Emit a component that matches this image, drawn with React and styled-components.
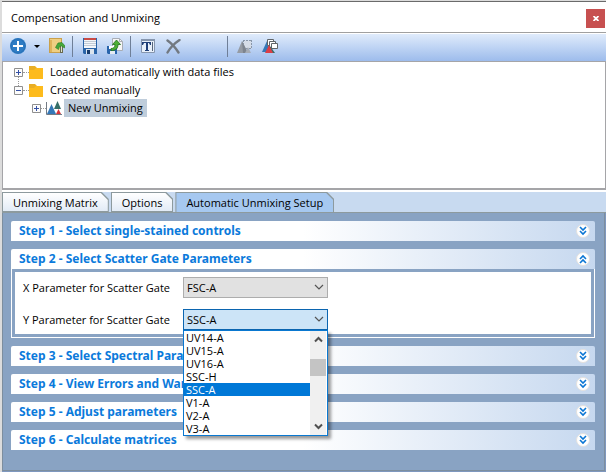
import React, { useState } from 'react'
import styled, { createGlobalStyle } from 'styled-components'

const GlobalStyle = createGlobalStyle`
  * {
    box-sizing: border-box;
  }
  body {
    margin: 0;
    background: #dcdcdc;
    color: #000;
    font-family: 'Open Sans', 'Noto Sans', sans-serif;
    font-size: 11px;
    line-height: 18px;
  }
  button, select {
    margin: 0;
    padding: 0;
    border: 0;
    background: none;
    color: inherit;
    font: inherit;
  }
  svg {
    display: block;
    flex: none;
  }
`

const Window = styled.main`
  margin: 1px 0 0 2px;
  min-height: calc(100vh - 1px);
  display: flex;
  flex-direction: column;
  border-top: 1px solid #6b6b6b;
  background: #7f98bf;
`

const TitleBar = styled.header`
  height: 30px;
  display: flex;
  align-items: center;
  justify-content: space-between;
  padding: 2px 1px 0 9px;
  background: #fff;
`

const Title = styled.h1`
  margin: 0;
  font-size: 11px;
  font-weight: 400;
`

const CloseButton = styled.button`
  width: 19px;
  height: 19px;
  display: flex;
  align-items: center;
  justify-content: center;
  background: #c75050;
`

const Toolbar = styled.div`
  height: 30px;
  display: flex;
  align-items: center;
  padding: 0 0 2px 8px;
  border-top: 1px solid #a0a0a0;
  border-bottom: 1px solid #a5a5a8;
  box-shadow: inset 0 1px #fff;
  background: linear-gradient(#e2edfc, #9dbcec);
`

const ToolButton = styled.button`
  width: ${p => p.$narrow ? 14 : 16}px;
  height: 20px;
  margin-right: ${p => p.$gap || 9}px;
  display: flex;
  align-items: center;
  justify-content: center;
`

const Separator = styled.span`
  width: 1px;
  height: 21px;
  margin-right: 9px;
  background: #6f7f98;
`

const Tree = styled.ul`
  height: 128px;
  margin: 0;
  padding: 1px 0 0 11px;
  list-style: none;
  background: #fff;
  border: 1px solid #a5a5a8;
  border-top: 0;
  border-bottom-width: 2px;
`

const Branch = styled.ul`
  margin: 0;
  padding: 0 0 0 18px;
  list-style: none;
`

const TreeRow = styled.div`
  height: 18px;
  display: flex;
  align-items: center;
`

const Expander = styled.button`
  position: relative;
  width: 9px;
  height: 9px;

  &::after {
    content: '';
    display: ${p => p.$linked ? 'block' : 'none'};
    position: absolute;
    top: 9px;
    left: 4px;
    height: 9px;
    border-left: 1px dotted #999;
  }
`

const Dots = styled.span`
  width: ${p => p.$short ? 5 : 6}px;
  border-top: 1px dotted #999;
`

const NodeLabel = styled.span`
  margin-left: ${p => p.$selected ? 2 : 3}px;
  padding: 0 4px;
  background: ${p => p.$selected ? '#bfcddb' : 'transparent'};
`

const TabBar = styled.div`
  display: flex;
  gap: 2px;
  height: 23px;
  border-top: 2px solid #fff;
  border-bottom: 1px solid #8d9a9e;
  background: #c8daf0;
`

const cut = 'polygon(0 0, calc(100% - 7px) 0, 100% 7px, 100% 100%, 0 100%)'

const Tab = styled.button`
  height: ${p => p.$active ? 21 : 20}px;
  padding: 1px;
  display: flex;
  clip-path: ${cut};
  background: #8d9a9e;
`

const TabFace = styled.span`
  height: 100%;
  padding: 1px 10px 0;
  white-space: nowrap;
  clip-path: ${cut};
  background: ${p => p.$active ? '#a6c8f0' : 'linear-gradient(#fff, #e2ebf6)'};
`

const Panel = styled.section`
  flex: 1;
  display: flex;
  flex-direction: column;
  gap: 8px;
  margin: 0 1px 1px 0;
  padding: 8px 9px 8px 8px;
  border: 1px solid #7d8e9e;
  border-top: 0;
  background: #89a3c3;
`

const StepHeader = styled.button`
  width: 100%;
  height: 20px;
  padding: 0 5px 0 8px;
  display: flex;
  align-items: center;
  justify-content: space-between;
  border-radius: 2px 2px 0 0;
  background: linear-gradient(90deg, #fff 50%, #c6d8ef);
  color: #0b7adb;
  font-family: 'Noto Sans', sans-serif;
  font-size: 12px;
  font-weight: 700;
`

const StepBody = styled.div`
  padding: 3px;
  border: 1px solid #fff;
  border-top: 0;
`

const StepForm = styled.div`
  display: grid;
  grid-template-columns: 160px 145px;
  row-gap: 11px;
  padding: 5px 8px 4px;
  background: #fff;
`

const Label = styled.label`
  line-height: 21px;
`

const Field = styled.div`
  position: relative;
`

const Combo = styled.select`
  display: block;
  width: 100%;
  height: 21px;
  padding-left: 3px;
  appearance: none;
  border: 1px solid ${p => p.$open ? '#0b65b0' : '#adadad'};
  background: ${p => p.$open ? '#cce4f7' : '#e1e1e1'};
`

const ComboArrow = styled.svg`
  position: absolute;
  top: 7px;
  right: 4px;
  pointer-events: none;
`

const Popup = styled.div`
  position: absolute;
  z-index: 1;
  top: 21px;
  left: 0;
  right: 0;
  display: flex;
  border: 1px solid #0a78d0;
  background: #fff;
  box-shadow: 3px 3px 3px rgba(0, 0, 0, 0.4);
`

const Options = styled.ul`
  flex: 1;
  margin: 0;
  padding: 0;
  list-style: none;
`

const Option = styled.li`
  height: 13px;
  padding-left: 2px;
  line-height: 13px;
  background: ${p => p.$selected ? '#0078d7' : 'transparent'};
  color: ${p => p.$selected ? '#fff' : '#000'};
`

const ScrollBar = styled.div`
  width: 17px;
  display: flex;
  flex-direction: column;
  justify-content: space-between;
  border-right: 1px solid #fff;
  background: #f0f0f0;
`

const ScrollButton = styled.button`
  height: 17px;
  display: flex;
  align-items: center;
  justify-content: center;
`

const Thumb = styled.span`
  height: 17px;
  margin-bottom: 31px;
  background: #c4c4c4;
`

const AddIcon = () => (
  <svg width="16" height="16" viewBox="0 0 16 16">
    <circle cx="8" cy="8" r="8" fill="#2e7cc4" />
    <circle cx="8" cy="8" r="7" fill="none" stroke="#2870b6" />
    <path d="M8 3v10M3 8h10" stroke="#fff" strokeWidth="2" />
  </svg>
)

const OpenIcon = () => (
  <svg width="16" height="16" viewBox="0 0 16 16">
    <path d="M0 0h13v15H0z" fill="#c9a04c" />
    <path d="M1 1h11v13H1z" fill="#efcf83" />
    <path d="M1 2h2v12H1z" fill="#dfb45b" />
    <path d="M12.500 15V8" stroke="#6a6a50" strokeWidth="3" />
    <path d="M12.500 14V8" stroke="#dfe8d0" />
    <path d="M6.500 9.500L9 5l4-.5 3 3.500-.5 2-3-2-2 .5-1 3z" fill="#45a83a" stroke="#2a7a25" strokeWidth=".6" />
  </svg>
)

const SaveIcon = () => (
  <svg width="14" height="16" viewBox="0 0 14 16">
    <path d="M0 0h14v16H1l-1-1z" fill="#2a64a8" />
    <path d="M1 2h12v8H1z" fill="#f4f7fb" />
    <path d="M1 0h12v2H1z" fill="#c94a44" />
    <path d="M1 3.500h12M1 5.500h12M1 7.500h12" stroke="#c3ccd6" />
    <path d="M3 11h8v5H3z" fill="#dce4ed" />
    <path d="M4 12h3v4H4z" fill="#173b6c" />
  </svg>
)

const ExportIcon = () => (
  <svg width="16" height="16" viewBox="0 0 16 16">
    <path d="M5.500.5h7l3 3v9h-10z" fill="#f5f5f5" stroke="#a8adb5" />
    <path d="M12.500.5v3h3" fill="none" stroke="#a8adb5" />
    <path d="M0 8h10v8H1l-1-1z" fill="#2864ac" />
    <path d="M2 8h6v3H2z" fill="#fff" />
    <path d="M3 13h5v3H3z" fill="#e5ebf3" />
    <path d="M4 10.500c3 0 4-1.500 4-4H5.500L9.500 2l4 4.500H11c0 4-2 6-7 6z" fill="#4caf35" stroke="#20701a" strokeWidth=".8" />
  </svg>
)

const RenameIcon = () => (
  <svg width="14" height="14" viewBox="0 0 14 14">
    <path d="M.5.5h13v13H.5z" fill="#e8f0fa" stroke="#8696ae" />
    <path d="M0 0h14v2H0z" fill="#8696ae" />
    <path d="M1 3h9v3H9L8 4H7v7h1v1H4v-1h1V4H3L2 6H1z" fill="#1f3f78" />
    <path d="M11.500 3v9" stroke="#56657c" />
  </svg>
)

const DeleteIcon = () => (
  <svg width="15" height="15" viewBox="0 0 15 15">
    <path d="M1.500 1.500C5 4 9 8 12.500 13.500M13.500 1C9 4 4 9 1.500 13.500" fill="none" stroke="#727981" strokeWidth="2.400" strokeLinecap="round" />
  </svg>
)

const GateIcon = () => (
  <svg width="16" height="16" viewBox="0 0 16 16">
    <path d="M6 2.500h8.500V11H8" fill="#d5dce7" />
    <path d="M6 2.500h9M14.500 2v9M6.500 2v4M9 10.500h6" fill="none" stroke="#8997aa" strokeDasharray="2 1" />
    <path d="M0 15L5 3l6 12z" fill="#959ba4" />
    <path d="M5 3l6 12H6z" fill="#7d848e" />
    <path d="M8 15l3-6 3 6z" fill="#a7adb6" />
  </svg>
)

const StackIcon = () => (
  <svg width="16" height="16" viewBox="0 0 16 16">
    <path d="M0 14L5 3l5 11z" fill="#3478b8" />
    <path d="M5.500 1.500h6v6h-6z" fill="#fff" stroke="#5f6468" />
    <path d="M7.500 3.500h6v6h-6z" fill="#fff" stroke="#5f6468" />
    <path d="M9.500 5.500h6v5h-6z" fill="#fff" stroke="#5f6468" />
    <path d="M8 8l5 7H8z" fill="#356f68" />
    <path d="M3 15l4-8 4 8z" fill="#dc3e46" />
  </svg>
)

const FolderIcon = () => (
  <svg width="14" height="13" viewBox="0 0 14 13">
    <path d="M0 0h6l2 2h6v11H0z" fill="#e9ae25" />
    <path d="M0 4h5l2-2h7v11H0z" fill="#fdbb1d" />
  </svg>
)

const MatrixIcon = () => (
  <svg width="16" height="15" viewBox="0 0 16 15">
    <path d="M1 13L5.500 3 10 13z" fill="#3478b8" />
    <path d="M8 8l3.500-8L15 8z" fill="#356f68" />
    <path d="M10 13l2.500-5 2.500 5z" fill="#d8353b" />
    <path d="M.5 1v12.500H16" fill="none" stroke="#737b85" />
  </svg>
)

const Box = ({ open }) => (
  <svg width="9" height="9" viewBox="0 0 9 9">
    <path d="M.5.5h8v8h-8z" fill="#fcfcfc" stroke="#8f8f8f" />
    <path d={open ? 'M2 4.500h5' : 'M2 4.500h5M4.500 2v5'} stroke="#3450a5" />
  </svg>
)

const Chevrons = ({ up }) => (
  <svg width="14" height="14" viewBox="0 0 14 14">
    <circle cx="7" cy="7" r="6.500" fill="#fff" stroke="#e3e0dd" />
    <path
      d={up ? 'M4 7l3-3 3 3M4 11l3-3 3 3' : 'M4 3l3 3 3-3M4 7l3 3 3-3'}
      fill="none"
      stroke="#0b76d4"
      strokeWidth="1.600"
    />
  </svg>
)

const ScrollArrow = ({ up }) => (
  <svg width="9" height="7" viewBox="0 0 9 7">
    <path d={up ? 'M1 5.500L4.500 2 8 5.500' : 'M1 1.500L4.500 5 8 1.500'} fill="none" stroke="#505050" strokeWidth="2" />
  </svg>
)

const Step = ({ title, open, onToggle, children }) => (
  <div>
    <StepHeader aria-expanded={open} onClick={onToggle}>
      {title}
      <Chevrons up={open} />
    </StepHeader>
    {open && children && <StepBody>{children}</StepBody>}
  </div>
)

const tabs = ['Unmixing Matrix', 'Options', 'Automatic Unmixing Setup']
const parameters = ['UV14-A', 'UV15-A', 'UV16-A', 'SSC-H', 'SSC-A', 'V1-A', 'V2-A', 'V3-A']
const steps = [
  'Step 1 - Select single-stained controls',
  'Step 2 - Select Scatter Gate Parameters',
  'Step 3 - Select Spectral Parameters',
  'Step 4 - View Errors and Warnings',
  'Step 5 - Adjust parameters',
  'Step 6 - Calculate matrices'
]

const ParameterSelect = ({ id, label, value, onChange, open, onPick }) => (
  <>
    <Label htmlFor={id}>{label}</Label>
    <Field>
      <Combo id={id} value={value} $open={open} onChange={e => onChange(e.target.value)}>
        {['FSC-A', ...parameters].map(name => <option key={name}>{name}</option>)}
      </Combo>
      <ComboArrow width="10" height="7" viewBox="0 0 10 7">
        <path d="M1 1l4 4 4-4" fill="none" stroke="#555" strokeWidth="1.200" />
      </ComboArrow>
      {open && (
        <Popup>
          <Options role="listbox" aria-label={label}>
            {parameters.map(name => (
              <Option
                key={name}
                role="option"
                aria-selected={name === value}
                $selected={name === value}
                onClick={() => onPick(name)}
              >
                {name}
              </Option>
            ))}
          </Options>
          <ScrollBar>
            <ScrollButton aria-label="Scroll up"><ScrollArrow up /></ScrollButton>
            <Thumb />
            <ScrollButton aria-label="Scroll down"><ScrollArrow /></ScrollButton>
          </ScrollBar>
        </Popup>
      )}
    </Field>
  </>
)

const App = () => {
  const [tab, setTab] = useState(2)
  const [openStep, setOpenStep] = useState(1)
  const [x, setX] = useState('FSC-A')
  const [y, setY] = useState('SSC-A')
  const [listOpen, setListOpen] = useState(true)

  const pick = name => {
    setY(name)
    setListOpen(false)
  }

  return (
    <>
      <GlobalStyle />
      <Window>
        <TitleBar>
          <Title>Compensation and Unmixing</Title>
          <CloseButton aria-label="Close">
            <svg width="6" height="5" viewBox="0 0 6 5">
              <path d="M.5 0l5 5M5.500 0l-5 5" stroke="#fff" strokeWidth="1.800" />
            </svg>
          </CloseButton>
        </TitleBar>

        <Toolbar>
          <ToolButton aria-label="Add" $gap={4}><AddIcon /></ToolButton>
          <ToolButton aria-label="Add menu" $narrow $gap={5}>
            <svg width="6" height="3" viewBox="0 0 6 3"><path d="M0 0h6L3 3z" /></svg>
          </ToolButton>
          <ToolButton aria-label="Open" $gap={7}><OpenIcon /></ToolButton>
          <Separator />
          <ToolButton aria-label="Save"><SaveIcon /></ToolButton>
          <ToolButton aria-label="Export" $gap={7}><ExportIcon /></ToolButton>
          <Separator />
          <ToolButton aria-label="Rename"><RenameIcon /></ToolButton>
          <ToolButton aria-label="Delete" $gap={46}><DeleteIcon /></ToolButton>
          <Separator />
          <ToolButton aria-label="Gate"><GateIcon /></ToolButton>
          <ToolButton aria-label="Copy gates"><StackIcon /></ToolButton>
        </Toolbar>

        <Tree>
          <li>
            <TreeRow>
              <Expander aria-label="Expand" $linked><Box /></Expander>
              <Dots />
              <FolderIcon />
              <NodeLabel>Loaded automatically with data files</NodeLabel>
            </TreeRow>
          </li>
          <li>
            <TreeRow>
              <Expander aria-label="Collapse"><Box open /></Expander>
              <Dots />
              <FolderIcon />
              <NodeLabel>Created manually</NodeLabel>
            </TreeRow>
            <Branch>
              <li>
                <TreeRow>
                  <Expander aria-label="Expand"><Box /></Expander>
                  <Dots $short />
                  <MatrixIcon />
                  <NodeLabel $selected>New Unmixing</NodeLabel>
                </TreeRow>
              </li>
            </Branch>
          </li>
        </Tree>

        <TabBar role="tablist">
          {tabs.map((name, i) => (
            <Tab key={name} role="tab" aria-selected={tab === i} $active={tab === i} onClick={() => setTab(i)}>
              <TabFace $active={tab === i}>{name}</TabFace>
            </Tab>
          ))}
        </TabBar>

        <Panel>
          {steps.map((title, i) => (
            <Step key={title} title={title} open={openStep === i} onToggle={() => setOpenStep(openStep === i ? -1 : i)}>
              {i === 1 && (
                <StepForm>
                  <ParameterSelect id="x-param" label="X Parameter for Scatter Gate" value={x} onChange={setX} />
                  <ParameterSelect
                    id="y-param"
                    label="Y Parameter for Scatter Gate"
                    value={y}
                    onChange={setY}
                    open={listOpen}
                    onPick={pick}
                  />
                </StepForm>
              )}
            </Step>
          ))}
        </Panel>
      </Window>
    </>
  )
}

export default App
